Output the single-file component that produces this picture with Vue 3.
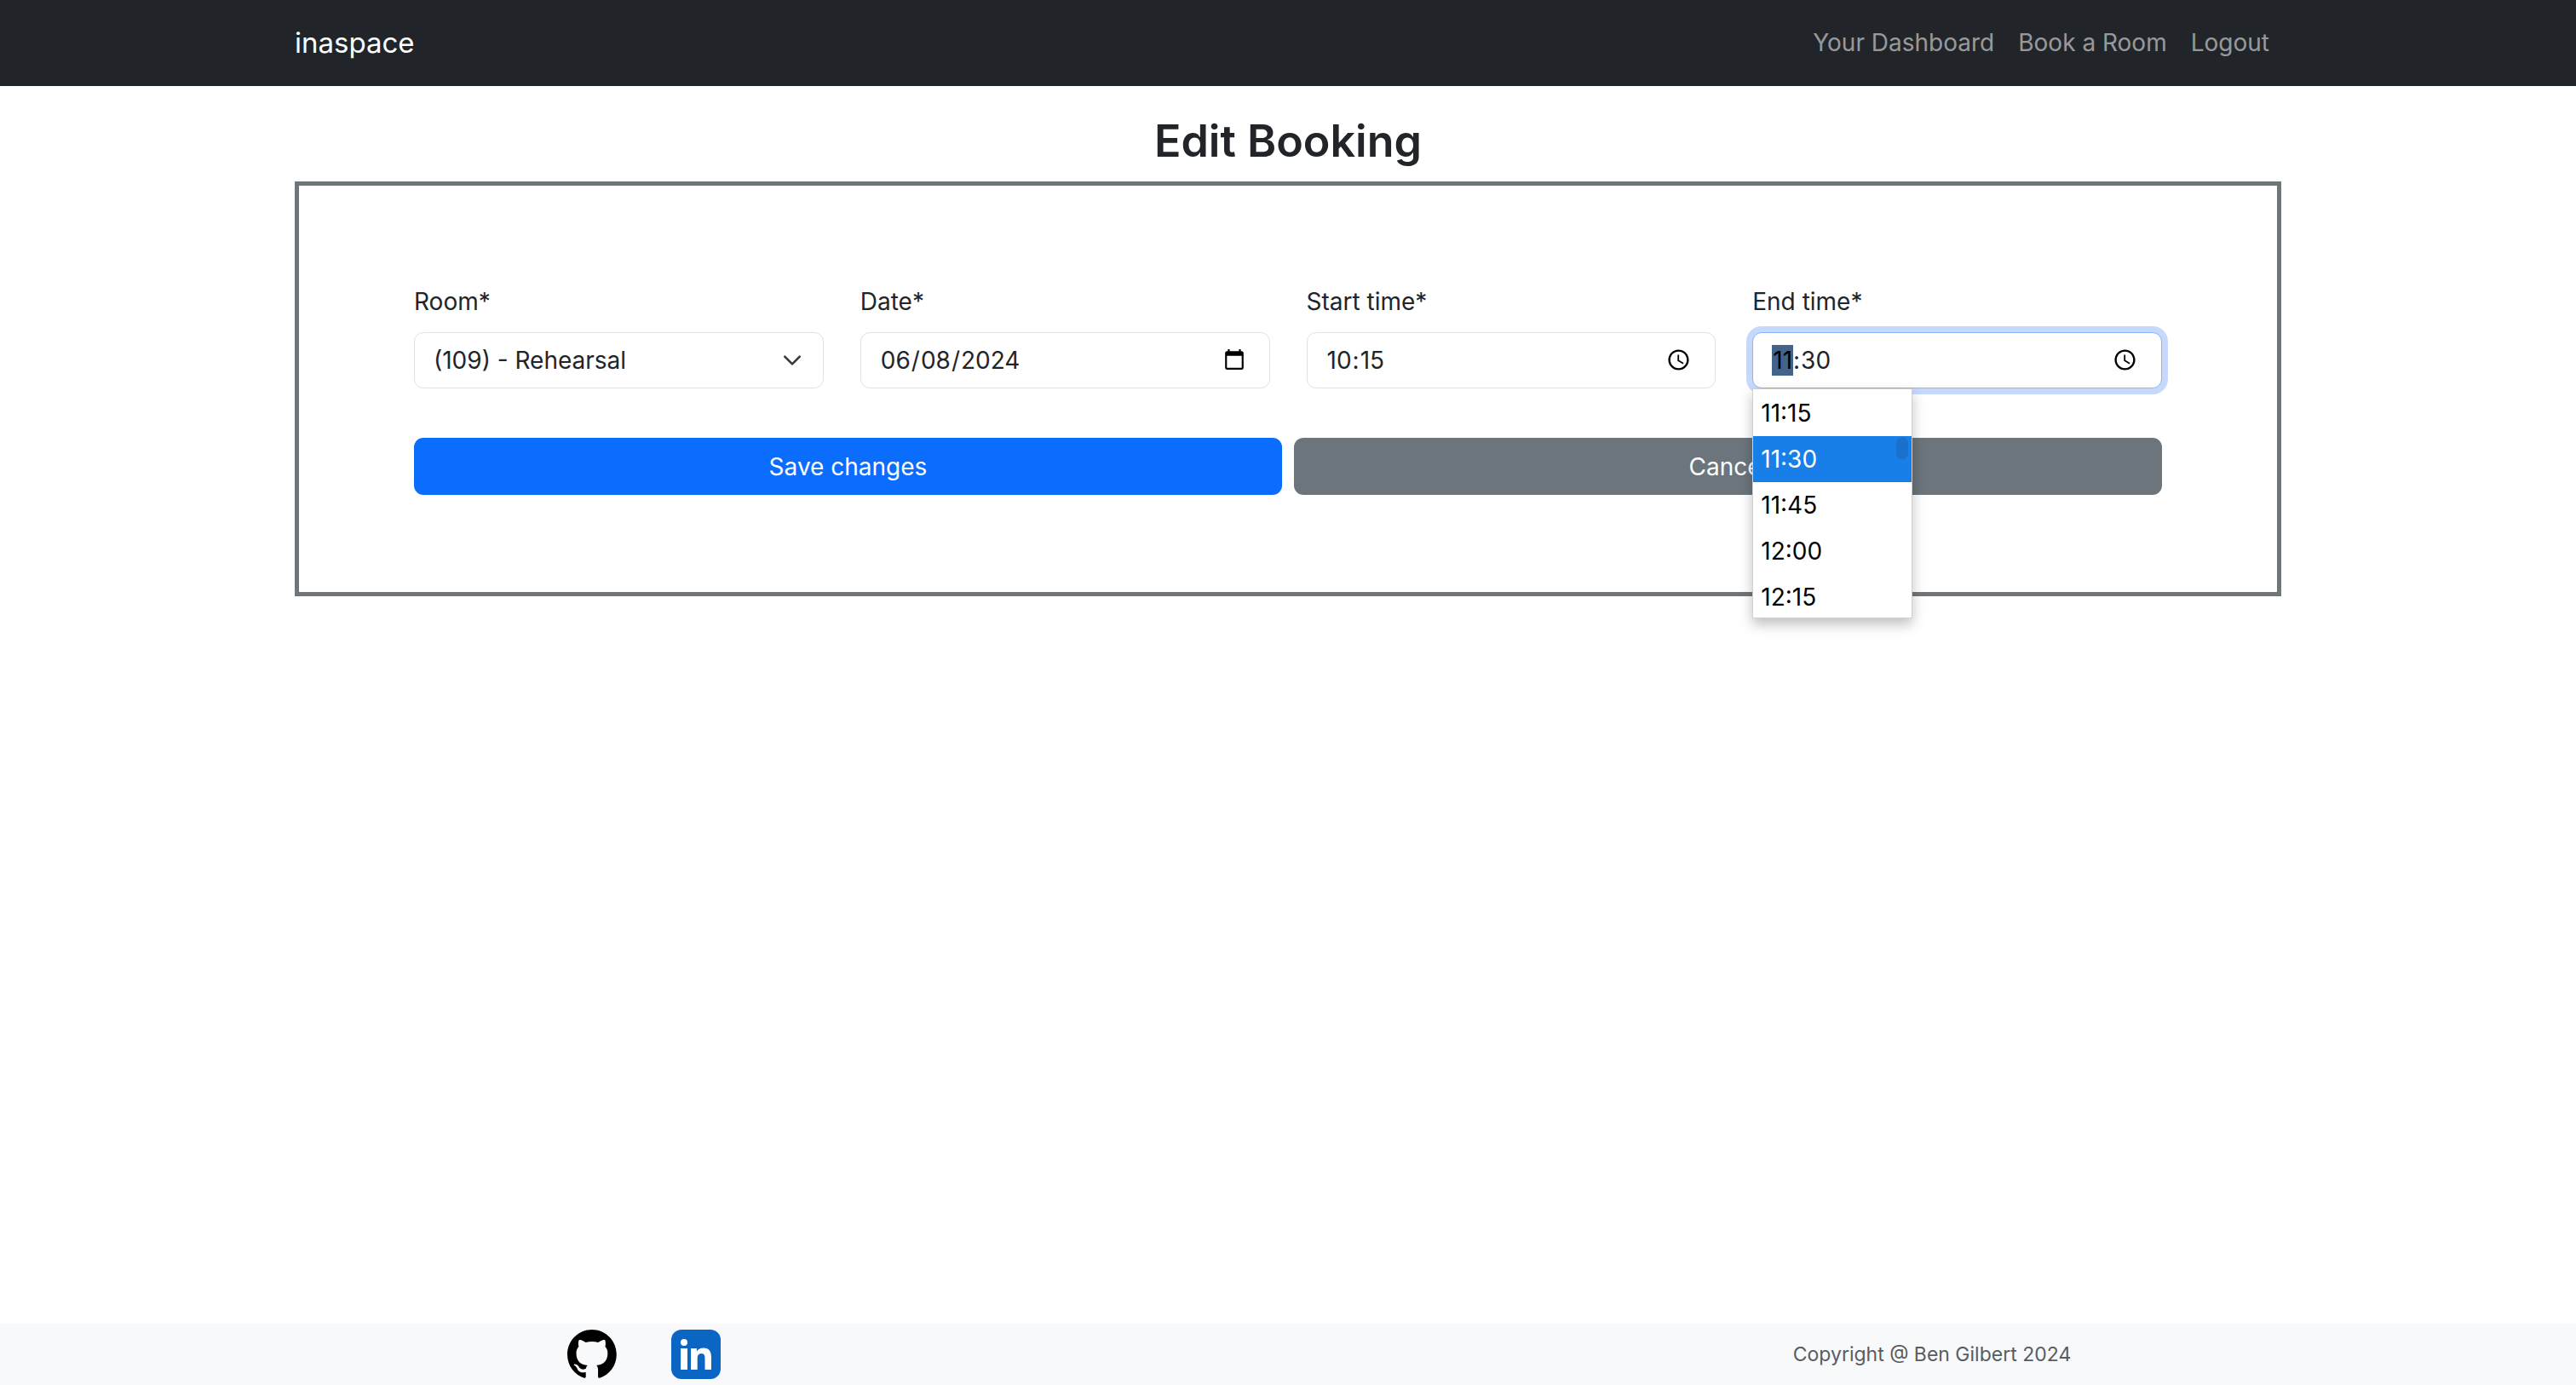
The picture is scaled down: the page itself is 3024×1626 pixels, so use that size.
<script setup>
import { ref } from 'vue'

const links = ['Your Dashboard', 'Book a Room', 'Logout']
const rooms = ['(109) - Rehearsal']
const times = ['11:15', '11:30', '11:45', '12:00', '12:15']

const room = ref(rooms[0])
const date = ref('2024-06-08')
const start = ref('10:15')
const end = ref('11:30')
</script>

<template>
  <div class="page">
    <header class="navbar">
      <nav class="container nav-row">
        <a class="brand" href="#">inaspace</a>
        <div class="nav-links">
          <a v-for="link in links" :key="link" class="nav-link" href="#">{{ link }}</a>
        </div>
      </nav>
    </header>

    <main class="container main">
      <h1 class="title">Edit Booking</h1>
      <form class="card" @submit.prevent>
        <div class="fields">
          <div class="field">
            <label for="room">Room*</label>
            <select id="room" v-model="room" class="control select">
              <option v-for="r in rooms" :key="r">{{ r }}</option>
            </select>
          </div>
          <div class="field">
            <label for="date">Date*</label>
            <input id="date" v-model="date" class="control" type="date" />
          </div>
          <div class="field">
            <label for="start">Start time*</label>
            <input id="start" v-model="start" class="control" type="time" />
          </div>
          <div class="field">
            <label for="end">End time*</label>
            <div class="combo">
              <input id="end" v-model="end" class="control active" type="time" />
              <ul class="menu" role="listbox" aria-label="End time">
                <li
                  v-for="t in times"
                  :key="t"
                  class="option"
                  :class="{ selected: t === end }"
                  role="option"
                  :aria-selected="t === end"
                  @click="end = t"
                >
                  {{ t }}
                </li>
                <li class="thumb" role="presentation"></li>
              </ul>
            </div>
          </div>
        </div>
        <div class="actions">
          <button class="btn primary" type="submit">Save changes</button>
          <button class="btn secondary" type="button">Cancel</button>
        </div>
      </form>
    </main>

    <footer class="footer">
      <div class="social">
        <a href="#" aria-label="GitHub">
          <svg class="logo" viewBox="0 0 98 98">
            <path
              d="M48.854 0C21.839 0 0 22 0 49.217c0 21.756 13.993 40.172 33.405 46.69 2.427.49 3.316-1.059 3.316-2.362 0-1.141-.08-5.052-.08-9.127-13.59 2.934-16.42-5.867-16.42-5.867-2.184-5.704-5.42-7.17-5.42-7.17-4.448-3.015.324-3.015.324-3.015 4.934.326 7.523 5.052 7.523 5.052 4.367 7.496 11.404 5.378 14.235 4.074.404-3.178 1.699-5.378 3.074-6.6-10.839-1.141-22.243-5.378-22.243-24.283 0-5.378 1.94-9.778 5.014-13.2-.485-1.222-2.184-6.275.486-13.038 0 0 4.125-1.304 13.426 5.052a46.97 46.97 0 0 1 12.214-1.63c4.125 0 8.33.571 12.213 1.63 9.302-6.356 13.427-5.052 13.427-5.052 2.67 6.763.97 11.816.485 13.038 3.155 3.422 5.015 7.822 5.015 13.2 0 18.905-11.404 23.06-22.324 24.283 1.78 1.548 3.316 4.481 3.316 9.126 0 6.6-.08 11.897-.08 13.526 0 1.304.89 2.853 3.316 2.364 19.412-6.52 33.405-24.935 33.405-46.691C97.707 22 75.788 0 48.854 0z"
            />
          </svg>
        </a>
        <a href="#" aria-label="LinkedIn">
          <svg class="logo" viewBox="0 0 58 58">
            <rect width="58" height="58" rx="12" fill="#0a66c2" />
            <g fill="#fff">
              <circle cx="15" cy="15" r="4" />
              <rect x="11" y="22" width="8" height="25" />
              <path
                d="M23 22h7v3.500c1.200-2.200 3.900-4.100 7.500-4.100 7.600 0 9.500 4.600 9.500 11.400V47h-7.500V34.500c0-3-.1-6.500-4-6.500s-4.800 3-4.800 6.300V47H23z"
              />
            </g>
          </svg>
        </a>
      </div>
      <p class="copyright">Copyright @ Ben Gilbert 2024</p>
    </footer>
  </div>
</template>

<style>
body {
  margin: 0;
  background: #fff;
}
</style>

<style scoped>
.page {
  display: flex;
  flex-direction: column;
  min-height: 100vh;
  color: #212529;
  font: 28px/43px Inter, sans-serif;
}

.page * {
  box-sizing: border-box;
}

a {
  text-decoration: none;
}

.container {
  width: 100%;
  max-width: 2376px;
  margin: 0 auto;
  padding: 0 22px;
}

.navbar {
  background: #212529;
}

.nav-row {
  display: flex;
  align-items: center;
  justify-content: space-between;
  min-height: 101px;
}

.brand {
  color: #fff;
  font-size: 33px;
}

.nav-links {
  display: flex;
  gap: 28px;
  padding-right: 14px;
}

.nav-link {
  color: rgba(255, 255, 255, 0.55);
}

.main {
  flex: 1;
}

.title {
  margin: 30px 0 12px;
  font-size: 52px;
  font-weight: 600;
  line-height: 70px;
  text-align: center;
}

.card {
  padding: 115px 135px 114px;
  border: 5px solid #6f7679;
}

.fields {
  display: grid;
  grid-template-columns: repeat(4, 1fr);
  gap: 43px;
}

.field {
  display: flex;
  flex-direction: column;
  gap: 14px;
}

.control {
  width: 100%;
  height: 66px;
  padding: 0 25px 0 22px;
  border: 1px solid #dee2e6;
  border-radius: 11px;
  outline: 0;
  background: #fff;
  color: #212529;
  font: inherit;
}

.control::-webkit-datetime-edit-ampm-field {
  display: none;
}

.select {
  appearance: none;
  background: #fff
    url("data:image/svg+xml,%3Csvg xmlns='http://www.w3.org/2000/svg' viewBox='0 0 16 16'%3E%3Cpath fill='none' stroke='%23343a40' stroke-linecap='round' stroke-linejoin='round' stroke-width='1.500' d='m3 5.500 5 5 5-5'/%3E%3C/svg%3E")
    no-repeat right 22px center / 28px;
}

.combo {
  position: relative;
}

.active {
  display: block;
  border-color: #86b7fe;
  box-shadow: 0 0 0 7px #c6d9fb;
}

.active::-webkit-datetime-edit-hour-field {
  background: #43638b;
  color: #000;
}

.menu {
  position: absolute;
  top: 100%;
  left: 0;
  width: 188px;
  height: 270px;
  margin: 0;
  padding: 1px 0;
  overflow: hidden;
  border: 1px solid #d0d0d0;
  background: #fff;
  box-shadow: 0 7px 14px rgba(0, 0, 0, 0.25);
  color: #000;
  list-style: none;
}

.option {
  padding: 0 9px;
  line-height: 54px;
}

.selected {
  background: #187fe9;
  color: #fff;
}

.thumb {
  position: absolute;
  top: 56px;
  right: 4px;
  width: 14px;
  height: 26px;
  border-radius: 7px;
  background: #1a70cb;
}

.actions {
  display: flex;
  gap: 14px;
  margin-top: 58px;
}

.btn {
  flex: 1;
  height: 67px;
  padding: 1px 0 0;
  border: 0;
  border-radius: 11px;
  color: #fff;
  font: inherit;
}

.primary {
  background: #0a6dfd;
}

.secondary {
  background: #6c757b;
}

.footer {
  display: grid;
  grid-template-columns: 1fr 1fr;
  align-items: center;
  min-height: 72px;
  background: #f8f9fb;
}

.social {
  display: flex;
  justify-content: center;
  gap: 64px;
}

.logo {
  display: block;
  width: 58px;
  height: 58px;
}

.copyright {
  margin: 0;
  padding-top: 1px;
  color: #595c5f;
  font-size: 23px;
  text-align: center;
}
</style>
